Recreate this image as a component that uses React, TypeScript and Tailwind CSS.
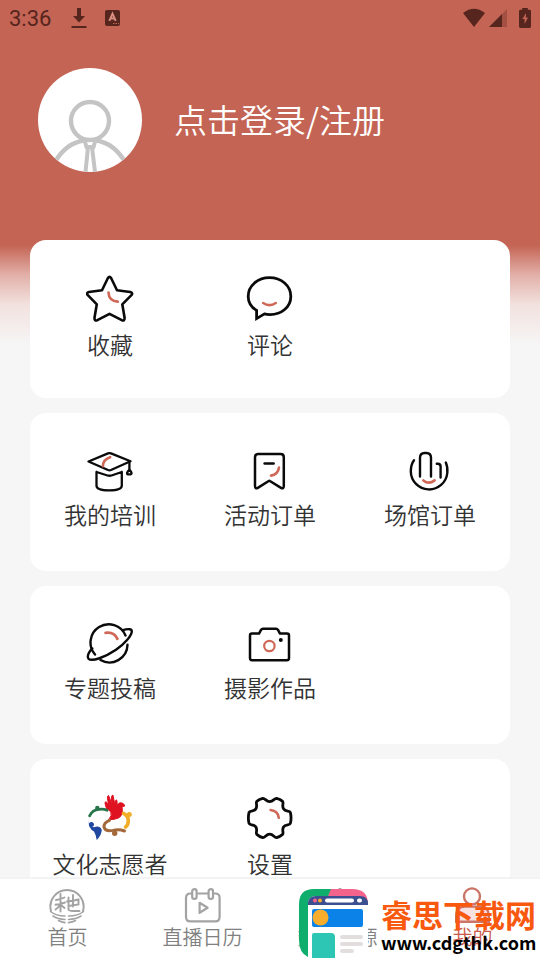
import type { ReactNode } from 'react';

interface MenuItem {
  label: string;
  icon: ReactNode;
}

interface MenuGroup {
  id: string;
  gap: string;
  items: MenuItem[];
}

interface Tab {
  label: string;
  icon: ReactNode;
  active?: boolean;
}

const INK = '#0a0a0a';
const ACCENT = '#cf6857';
const TAB_GRAY = '#a3a3a3';

const line = {
  fill: 'none',
  stroke: INK,
  strokeWidth: 2.6,
  strokeLinecap: 'round' as const,
  strokeLinejoin: 'round' as const,
};

const accentLine = { ...line, stroke: ACCENT };

function StarIcon() {
  return (
    <svg width="48" height="48" viewBox="0 0 48 48" {...line}>
      <path d="M21.8 3.2 Q23.5 .5 25.2 3.2 L31 15.2 L44.2 17 Q47.3 17.9 45.4 20.2 L36.3 29.3 L38.6 42.8 Q38.7 46.3 35.8 45.2 L23.5 38.8 L11.4 45.2 Q8.4 46.3 8.5 42.8 L10.8 29.3 L1.8 20.2 Q-.1 17.9 2.9 17 L16 15.2 Z" />
      <path d="M22.5 17.5 Q22.8 26 31.8 26.6" {...accentLine} />
    </svg>
  );
}

function CommentIcon() {
  return (
    <svg width="48" height="48" viewBox="0 0 48 48" {...line} strokeWidth={2.8} strokeLinejoin="miter">
      <path d="M10.6 35.4 C5 32 2.2 27 2.2 21.4 C2.2 10.6 12 2.6 23.4 2.6 C35.4 2.6 44.8 10.6 44.8 21.4 C44.8 32 35.4 39.6 24 39.6 C22.2 39.6 20.2 39.4 18.4 38.9 L10.6 43.6 Z" />
      <path d="M17.2 28 Q23.5 32.4 29.8 28" {...accentLine} />
    </svg>
  );
}

function TrainingIcon() {
  return (
    <svg width="48" height="46" viewBox="0 0 48 46" {...line} strokeWidth={2.3}>
      <path d="M2.5 12.5 L22 4.4 Q23.5 3.8 25 4.4 L44.5 12.3 L25 21 Q23.5 21.6 22 21 Z" />
      <path d="M43.4 13.6 V20.5 M43.4 20.5 Q39.6 24.8 42 25.3 H44.5 Q47 24.8 43.4 20.5" />
      <path d="M10.5 23 V36.8 Q10.5 41.4 23 41.4 Q35.8 41.4 35.8 36.8 V23 M10.5 23 L21.5 26.5 Q23.5 27 25.5 26.5 L35.8 23" />
      <path d="M24.2 8.2 Q16.8 10.6 17 17.2" {...accentLine} />
    </svg>
  );
}

function ActivityIcon() {
  return (
    <svg width="48" height="46" viewBox="0 0 48 46" {...line} strokeWidth={2.5}>
      <path d="M12.2 5 H34.6 Q37.8 5 37.8 8.2 V36.8 Q37.8 40.6 34.6 38.6 L23.9 32 Q23.3 31.6 22.7 32 L12.2 38.6 Q9 40.6 9 36.8 V8.2 Q9 5 12.2 5 Z" />
      <path d="M18.6 14.6 H27.6" />
      <path d="M33 18.5 Q32 25.6 25 26.6" {...accentLine} />
    </svg>
  );
}

function VenueIcon() {
  return (
    <svg width="48" height="46" viewBox="0 0 48 46" {...line} strokeWidth={2.4}>
      <path d="M8 11.2 C5.2 15 4.8 18 4.8 22.5 A18.3 18.3 0 0 0 41.3 24 C41.8 18.8 41.2 16.5 39.8 13.6" />
      <path d="M14 27.5 V8.8 Q14 4 18.6 4 H20.4 Q25 4 25 8.8 V27.5 M30.8 14.8 H31.8 Q34.6 14.8 34.6 17.6 V28.5" />
      <path d="M17.4 31.4 Q22.8 35.8 28.6 31.4" {...accentLine} />
    </svg>
  );
}

function PlanetIcon() {
  return (
    <svg width="48" height="46" viewBox="0 0 48 46" {...line} strokeWidth={2.4}>
      <path d="M9 32.5 A18.2 18.2 0 1 1 39.5 13.5" />
      <path d="M41.5 22.8 A18 18 0 0 1 14.5 38" />
      <path d="M36.8 8.2 C42.5 6.4 45.8 7 45.8 9.2 C45.8 13.5 39 21.5 30 27.8 C19 35.3 6 39.8 2.6 36.8 C.8 34.4 2.6 30.4 6.3 26.4" />
      <path d="M19.6 10.8 Q28 9.6 31.4 16.8" {...accentLine} strokeWidth={2.8} />
    </svg>
  );
}

function CameraIcon() {
  return (
    <svg width="48" height="46" viewBox="0 0 48 46" {...line} strokeWidth={2.5}>
      <path d="M6 11.6 H13 L15 7.8 Q15.6 6.8 17 6.8 H30 Q31.4 6.8 32 7.8 L34 11.6 H41 Q43 11.6 43 13.6 V36 Q43 38.2 41 38.2 H6 Q4 38.2 4 36 V13.6 Q4 11.6 6 11.6 Z" />
      <circle cx="23.4" cy="24" r="5.2" {...accentLine} strokeWidth={2.2} />
      <circle cx="34.8" cy="18" r="2" fill={INK} stroke="none" />
    </svg>
  );
}

function VolunteerIcon() {
  return (
    <svg width="48" height="48" viewBox="0 0 48 48" fill="none" strokeLinecap="round" strokeLinejoin="round">
      <path d="M20.5 14.5 Q17.5 6.5 20.5 8 L23.2 12.2 Q20 1.5 22.6 1.5 L26 10.2 Q24.6 .5 27 1.2 L28.8 10.5 Q29.2 4.5 31 6.5 L31.2 12.5 Q31.8 8.6 35 8.8 Q38 9 38.8 12 L36 12.8 Q37.5 20.5 33 23.8 Q28.5 25.8 22.5 25.8 Q26.5 21.5 24.8 17.8 Q22.5 16 20.5 14.5 Z" fill="#df1222" stroke="#df1222" strokeWidth="1" />
      <path d="M3.6 21.8 Q6.5 15.8 13 15.4 Q17.5 14.8 21 16.2" stroke="#28754c" strokeWidth="2.8" />
      <circle cx="11.3" cy="14" r="2.2" fill="#28754c" />
      <path d="M2.8 25.5 Q2.4 33 8 33.2 Q13.6 31 15.8 35.8 Q15.6 41.4 10.7 46 Q10.2 41 8 37.5 Q2 34.5 2.8 25.5 Z" fill="#2148a0" />
      <circle cx="5.4" cy="30.6" r="2.5" fill="#2148a0" />
      <path d="M23.5 26.3 Q17.8 28.5 18 33 Q19.5 38 27 36.4 Q33 34.8 38.5 37" stroke="#a3693a" strokeWidth="3" />
      <circle cx="28.7" cy="39.2" r="2.7" fill="#a3693a" />
      <path d="M37.5 19.4 Q42 21.5 42.3 26.5 Q42.4 31 39.5 33" stroke="#f2ad26" strokeWidth="3.6" />
      <circle cx="43.3" cy="20.4" r="2.5" fill="#f2ad26" />
    </svg>
  );
}

function SettingsIcon() {
  return (
    <svg width="48" height="48" viewBox="0 0 48 48" {...line} strokeWidth={2.8}>
      <path d="M16.8 4.4 C19 4 20 7.6 23.7 7.6 C27.4 7.6 28.4 4 30.6 4.4 Q34.2 5.2 36.6 7.4 C38 9 35.6 11.4 37.5 14.8 C39.3 18 43.5 16.2 44.3 18.2 Q45.8 24.2 44.3 29.6 C43.5 31.6 39.3 29.8 37.5 33 C35.6 36.4 38 38.8 36.6 40.4 Q34.2 42.6 30.6 43.6 C28.4 44 27.4 40.2 23.7 40.2 C20 40.2 19 44 16.8 43.6 Q13.2 42.6 10.8 40.4 C9.4 38.8 11.8 36.4 9.9 33 C8.1 29.8 3.9 31.6 3.1 29.6 Q1.6 24.2 3.1 18.2 C3.9 16.2 8.1 18 9.9 14.8 C11.8 11.4 9.4 9 10.8 7.4 Q13.2 5.2 16.8 4.4 Z" />
      <path d="M24.6 16 Q32 16.8 32.8 23.8" {...accentLine} />
    </svg>
  );
}

function HomeTabIcon() {
  return (
    <svg width="38" height="38" viewBox="0 0 38 38" fill="none" stroke={TAB_GRAY} strokeWidth="1.9" strokeLinecap="round">
      <path d="M2 24 A16.6 16.6 0 1 1 34 24" />
      <path d="M7 13 Q11 12.5 15.5 10.5 M11.5 7 V24.5 M6.5 17.8 Q11 17.5 16 15.5 M11 18 Q9 21 6.5 22.5 M12 18 L15.5 21" />
      <path d="M18 14.5 Q24 14 29.5 12.5 V17.5 L19.5 19 M24 8 V19.5 M19.5 10.5 V22.5 Q20 24 24 24 H30.5" />
      <path d="M1.500 24.5 Q7 29 16 29 M19.5 29 Q29 29 34.5 24.5 M4 29 Q9 32.3 16 32.5 M19.5 32.5 Q27 32.3 32 29 M9.500 33.5 Q12.5 35.3 16 35.6 M19.5 35.6 Q23.5 35.3 26.5 33.5" strokeWidth="1.6" />
    </svg>
  );
}

function CalendarTabIcon() {
  return (
    <svg width="38" height="38" viewBox="0 0 38 38" fill="none" stroke={TAB_GRAY} strokeWidth="2.2" strokeLinejoin="round">
      <path d="M13.5 6.5 H24.5 M8 6.5 H6.4 Q2 6.5 2 10.9 V30 Q2 34.4 6.4 34.4 H31.2 Q35.6 34.4 35.6 30 V10.9 Q35.6 6.5 31.2 6.5 H29.8" />
      <rect x="8.2" y="2.2" width="4.4" height="9.8" rx="2.2" />
      <rect x="24.6" y="2.2" width="4.4" height="9.8" rx="2.2" />
      <path d="M15.6 15.8 L23.6 20.8 L15.6 25.8 Z" />
    </svg>
  );
}

function ResourceTabIcon() {
  return (
    <svg width="38" height="38" viewBox="0 0 38 38" fill="none" stroke={TAB_GRAY} strokeWidth="2.2" strokeLinejoin="round">
      <path d="M21 2 L34 10 V26 L21 34 L8 26 V10 Z" />
      <path d="M8 10 L21 18 L34 10 M21 18 V34" />
    </svg>
  );
}

function ProfileTabIcon() {
  return (
    <svg width="38" height="38" viewBox="0 0 38 38" fill="#f7e2df" stroke="#cb7468" strokeWidth="2.4">
      <circle cx="18" cy="9.4" r="8" fill="white" />
      <path d="M2.2 34.8 V28.6 Q2.2 19.6 11.2 19.6 H25.8 Q34.8 19.6 34.8 28.6 V34.8 Z" />
    </svg>
  );
}

const groups: MenuGroup[] = [
  {
    id: 'mine',
    gap: 'gap-[5px]',
    items: [
      { label: '收藏', icon: <StarIcon /> },
      { label: '评论', icon: <CommentIcon /> },
    ],
  },
  {
    id: 'orders',
    gap: 'gap-0.5',
    items: [
      { label: '我的培训', icon: <TrainingIcon /> },
      { label: '活动订单', icon: <ActivityIcon /> },
      { label: '场馆订单', icon: <VenueIcon /> },
    ],
  },
  {
    id: 'works',
    gap: 'gap-0.5',
    items: [
      { label: '专题投稿', icon: <PlanetIcon /> },
      { label: '摄影作品', icon: <CameraIcon /> },
    ],
  },
  {
    id: 'more',
    gap: 'gap-[5px]',
    items: [
      { label: '文化志愿者', icon: <VolunteerIcon /> },
      { label: '设置', icon: <SettingsIcon /> },
    ],
  },
];

const tabs: Tab[] = [
  { label: '首页', icon: <HomeTabIcon /> },
  { label: '直播日历', icon: <CalendarTabIcon /> },
  { label: '数字资源', icon: <ResourceTabIcon /> },
  { label: '我的', icon: <ProfileTabIcon />, active: true },
];

function StatusBar() {
  return (
    <div className="flex h-9 items-center justify-between px-[9px] text-[#55251e]">
      <div className="flex items-center">
        <span className="pt-0.5 font-[Roboto,sans-serif] text-[22px] leading-9">3:36</span>
        <svg className="ml-5" width="16" height="22" viewBox="0 0 16 22" fill="currentColor">
          <path d="M6 1 H10 V9 H14 L8 15.4 L2 9 H6 Z M.5 19 H15.5 V21 H.5 Z" />
        </svg>
        <svg className="ml-[18px]" width="15" height="16" viewBox="0 0 15 16">
          <rect width="15" height="16" rx="2" fill="currentColor" />
          <path d="M4.3 10.8 L7.5 3.6 L10.7 10.8 M5.2 8.6 H9.8" fill="none" stroke="#d98d80" strokeWidth="2" />
          <path d="M8 13.5 H9.5 M10.5 13.5 H12 M13 13.5 H14" stroke="#c46454" strokeWidth="1.2" />
        </svg>
      </div>
      <div className="flex items-center">
        <svg width="22" height="20" viewBox="0 0 22 20" fill="currentColor">
          <path d="M0 5 Q11 -3.6 22 5 L11 19 Z" />
        </svg>
        <svg className="ml-1" width="18" height="18" viewBox="0 0 18 18" fill="currentColor">
          <path d="M0 18 L13 5 V18 Z" />
          <path d="M13 5 L18 0 V18 H13 Z" opacity=".3" />
        </svg>
        <svg className="ml-3" width="12" height="20" viewBox="0 0 12 20">
          <path d="M3.2 0 H8.8 V1.8 H10.6 Q12 1.8 12 3.2 V18.6 Q12 20 10.6 20 H1.4 Q0 20 0 18.6 V3.2 Q0 1.8 1.4 1.8 H3.2 Z" fill="currentColor" />
          <path d="M7 5 L3.4 11 H5.6 V16 L9 9.6 H6.8 Z" fill="#c46454" />
        </svg>
      </div>
    </div>
  );
}

function Avatar() {
  return (
    <svg className="size-[104px] rounded-full bg-white" viewBox="0 0 104 104" fill="none" stroke="#c4c4c4" strokeWidth="4.4">
      <circle cx="52" cy="53" r="19" />
      <path d="M17 94 Q28 75 46 72.5 M58 72.5 Q76 75 87 94" />
      <path d="M46.5 72 L48.5 79 H55.5 L57.5 72 M50 79 L47.5 104 M54 79 L57 104" strokeWidth="4" />
    </svg>
  );
}

function MenuCard({ group }: { group: MenuGroup }) {
  return (
    <section className="grid min-h-[158px] grid-cols-3 items-start rounded-2xl bg-white pt-[35px] pb-9">
      {group.items.map((item) => (
        <button key={item.label} className={`flex flex-col items-center ${group.gap}`}>
          <span className="flex h-12 items-center">{item.icon}</span>
          <span className="text-[23px] leading-8 font-[350] whitespace-nowrap text-[#333333]">
            {item.label}
          </span>
        </button>
      ))}
    </section>
  );
}

function TabBar() {
  return (
    <nav className="grid h-[83px] shrink-0 grid-cols-4 border-t-2 border-[#f3f3f3] bg-white pt-2">
      {tabs.map((tab) => (
        <button key={tab.label} className="flex flex-col items-center">
          {tab.icon}
          <span
            className={`text-[20px] leading-6 font-[350] whitespace-nowrap ${
              tab.active ? 'text-[#c95a4b]' : 'text-[#808080]'
            }`}
          >
            {tab.label}
          </span>
        </button>
      ))}
    </nav>
  );
}

function SiteMark() {
  return (
    <div className="pointer-events-none absolute right-0 bottom-0 flex items-start">
      <svg width="82" height="72" viewBox="1 0 82 72">
        <path d="M10 69 Q1 65 1 52 V16 Q1 1 16 1 H54 Q70 1 70 16 V69 Z" fill="white" />
        <path d="M70 16 Q70 1 54 1 H30 V10 H64 Z" fill="#f4638c" />
        <path d="M33 1 H16 Q1 1 1 16 V52 Q1 65 10 69 V16 Q10 8 18 8 H30 Z" fill="#0fae6c" />
        <path d="M10 16 Q10 8 18 8 H62 Q70 8 70 16 V17 H10 Z" fill="#3c4f91" />
        <circle cx="17" cy="12.5" r="2" fill="#f4638c" />
        <circle cx="22" cy="12.5" r="2" fill="#f8ad2d" />
        <rect x="27" y="10.5" width="29" height="4" rx="2" fill="white" />
        <rect x="59" y="10.5" width="5" height="4" rx="2" fill="white" />
        <rect x="14" y="21" width="51" height="18" rx="2" fill="#0a82e8" />
        <circle cx="22.5" cy="29.5" r="8" fill="#f8ad2d" />
        <path d="M14 47 Q14 45 16 45 H33 Q37 45 37 49 V70 H14 Z" fill="#2dc5b4" />
        <path d="M44 49 H63 M44 56 H63 M44 63 H54" stroke="#e2dede" strokeWidth="4" strokeLinecap="round" />
      </svg>
      <div className="flex w-[159px] flex-col pt-2">
        <span className="text-[31px] leading-9 font-bold whitespace-nowrap text-[#f8590f]">睿思下载网</span>
        <span className="text-[18px] leading-5 font-bold whitespace-nowrap text-black">
          www.cdgthk.com
        </span>
      </div>
    </div>
  );
}

export default function App() {
  return (
    <div className="relative flex h-screen flex-col overflow-hidden bg-[#f6f6f6] font-['Noto_Sans_CJK_SC',sans-serif]">
      <main className="flex-1 overflow-y-auto bg-[linear-gradient(#c46454_245px,#e2b0a8_275px,#f2e2df_305px,#f6f6f6_345px)] [scrollbar-width:none]">
        <StatusBar />
        <header className="flex h-[204px] items-start gap-8 pt-8 pl-[38px]">
          <Avatar />
          <button className="h-[104px] text-[33px] font-[350] whitespace-nowrap text-white">点击登录/注册</button>
        </header>
        <div className="flex flex-col gap-[15px] px-[30px] pb-4">
          {groups.map((group) => (
            <MenuCard key={group.id} group={group} />
          ))}
        </div>
      </main>
      <TabBar />
      <SiteMark />
    </div>
  );
}
